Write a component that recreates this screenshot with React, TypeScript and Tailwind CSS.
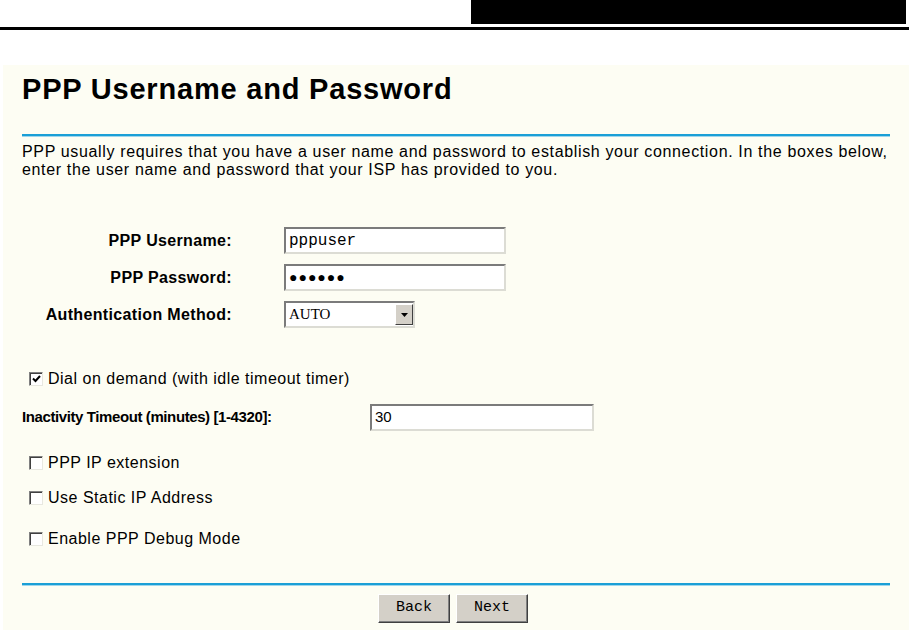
import React from 'react';

const sans = "font-['Liberation_Sans',Arial,sans-serif]";
const mono = "font-['Liberation_Mono','Courier_New',monospace]";

function Checkbox({ checked }: { checked?: boolean }) {
    return (
        <span className="flex h-[14px] w-[14px] shrink-0 items-center justify-center border border-t-[#808080] border-l-[#808080] border-b-[#e8e8e0] border-r-[#e8e8e0] bg-white shadow-[inset_1px_1px_0_#404040]">
            {checked && (
                <svg width="9" height="8" viewBox="0 0 9 8">
                    <path d="M1 3.5 L3.5 6 L8 1" fill="none" stroke="#000" strokeWidth="2" />
                </svg>
            )}
        </span>
    );
}

function TextBox({ value, w, serif }: { value: string; w: string; serif?: boolean }) {
    return (
        <div
            className={`flex h-[27px] items-center border-2 border-t-[#7b7b7b] border-l-[#7b7b7b] border-b-[#dcdcd4] border-r-[#dcdcd4] bg-white px-[3px] text-black ${w} ${serif ? mono : sans}`}
        >
            {value}
        </div>
    );
}

function WinButton({ label }: { label: string }) {
    return (
        <button
            className={`h-[29px] w-[72px] border border-t-white border-l-white border-b-[#404040] border-r-[#404040] bg-[#d4d0c8] text-[15px] text-black shadow-[inset_-1px_-1px_0_#808080] ${mono}`}
        >
            {label}
        </button>
    );
}

function CheckRow({ label, checked }: { label: string; checked?: boolean }) {
    return (
        <div className="flex h-[18px] items-center gap-[5px] pl-[7px]">
            <Checkbox checked={checked} />
            <span className="text-[16px] tracking-[0.5px]">{label}</span>
        </div>
    );
}

export default function App() {
    return (
        <div className={`h-[630px] w-[909px] overflow-hidden bg-white text-black ${sans}`}>
            {/* page header */}
            <div className="flex h-[27px] justify-end pr-[3px]">
                <div className="h-[24px] w-[435px] bg-black" />
            </div>
            <div className="h-[3px] w-full bg-black" />

            <div className="mt-[35px] ml-[3px] h-[600px] bg-[#fdfdf3] pl-[19px] pr-[19px]">
                <h1 className="pt-[7px] text-[29px] leading-[34px] font-bold tracking-[0.8px]">PPP Username and Password</h1>
                <div className="mt-[28px] h-[3px] border-b border-[#9fd6ec] bg-[#1a9fd6]" />

                <p className="mt-[6px] text-[16px] leading-[18px] tracking-[0.65px]">
                    PPP usually requires that you have a user name and password to establish your connection. In the boxes below,
                    enter the user name and password that your ISP has provided to you.
                </p>

                <div className="mt-[48px] flex flex-col gap-[10px]">
                    <div className="flex items-center">
                        <span className="w-[210px] text-right text-[16px] font-bold tracking-[0.35px]">PPP Username:</span>
                        <div className="ml-[52px]">
                            <TextBox value="pppuser" w="w-[222px] text-[16px]" serif />
                        </div>
                    </div>
                    <div className="flex items-center">
                        <span className="w-[210px] text-right text-[16px] font-bold tracking-[0.35px]">PPP Password:</span>
                        <div className="ml-[52px]">
                            <TextBox value="●●●●●●" w="w-[222px] text-[14px] tracking-[1px]" />
                        </div>
                    </div>
                    <div className="flex items-center">
                        <span className="w-[210px] text-right text-[16px] font-bold tracking-[0.35px]">Authentication Method:</span>
                        <div className="ml-[52px] flex h-[27px] w-[131px] items-center border-2 border-t-[#7b7b7b] border-l-[#7b7b7b] border-b-[#dcdcd4] border-r-[#dcdcd4] bg-white pl-[3px]">
                            <span className="flex-1 font-['Liberation_Serif','Times_New_Roman',serif] text-[15px]">AUTO</span>
                            <span className="flex h-[21px] w-[18px] items-center justify-center border border-t-white border-l-white border-b-[#404040] border-r-[#404040] bg-[#d4d0c8]">
                                <svg width="7" height="4" viewBox="0 0 7 4">
                                    <path d="M0 0 H7 L3.5 4 Z" fill="#000" />
                                </svg>
                            </span>
                        </div>
                    </div>
                </div>

                <div className="mt-[42px]">
                    <CheckRow label="Dial on demand (with idle timeout timer)" checked />
                </div>

                <div className="mt-[16px] flex items-center">
                    <span className="w-[348px] text-[15px] font-bold tracking-[-0.4px]">Inactivity Timeout (minutes) [1-4320]:</span>
                    <TextBox value="30" w="w-[224px] text-[15px]" />
                </div>

                <div className="mt-[23px] flex flex-col gap-[17px]">
                    <CheckRow label="PPP IP extension" />
                    <CheckRow label="Use Static IP Address" />
                    <div className="pt-[6px]">
                        <CheckRow label="Enable PPP Debug Mode" />
                    </div>
                </div>

                <div className="mt-[35px] h-[3px] border-b border-[#9fd6ec] bg-[#1a9fd6]" />
                <div className="mt-[8px] flex justify-center gap-[6px] pr-[6px]">
                    <WinButton label="Back" />
                    <WinButton label="Next" />
                </div>
            </div>
        </div>
    );
}
